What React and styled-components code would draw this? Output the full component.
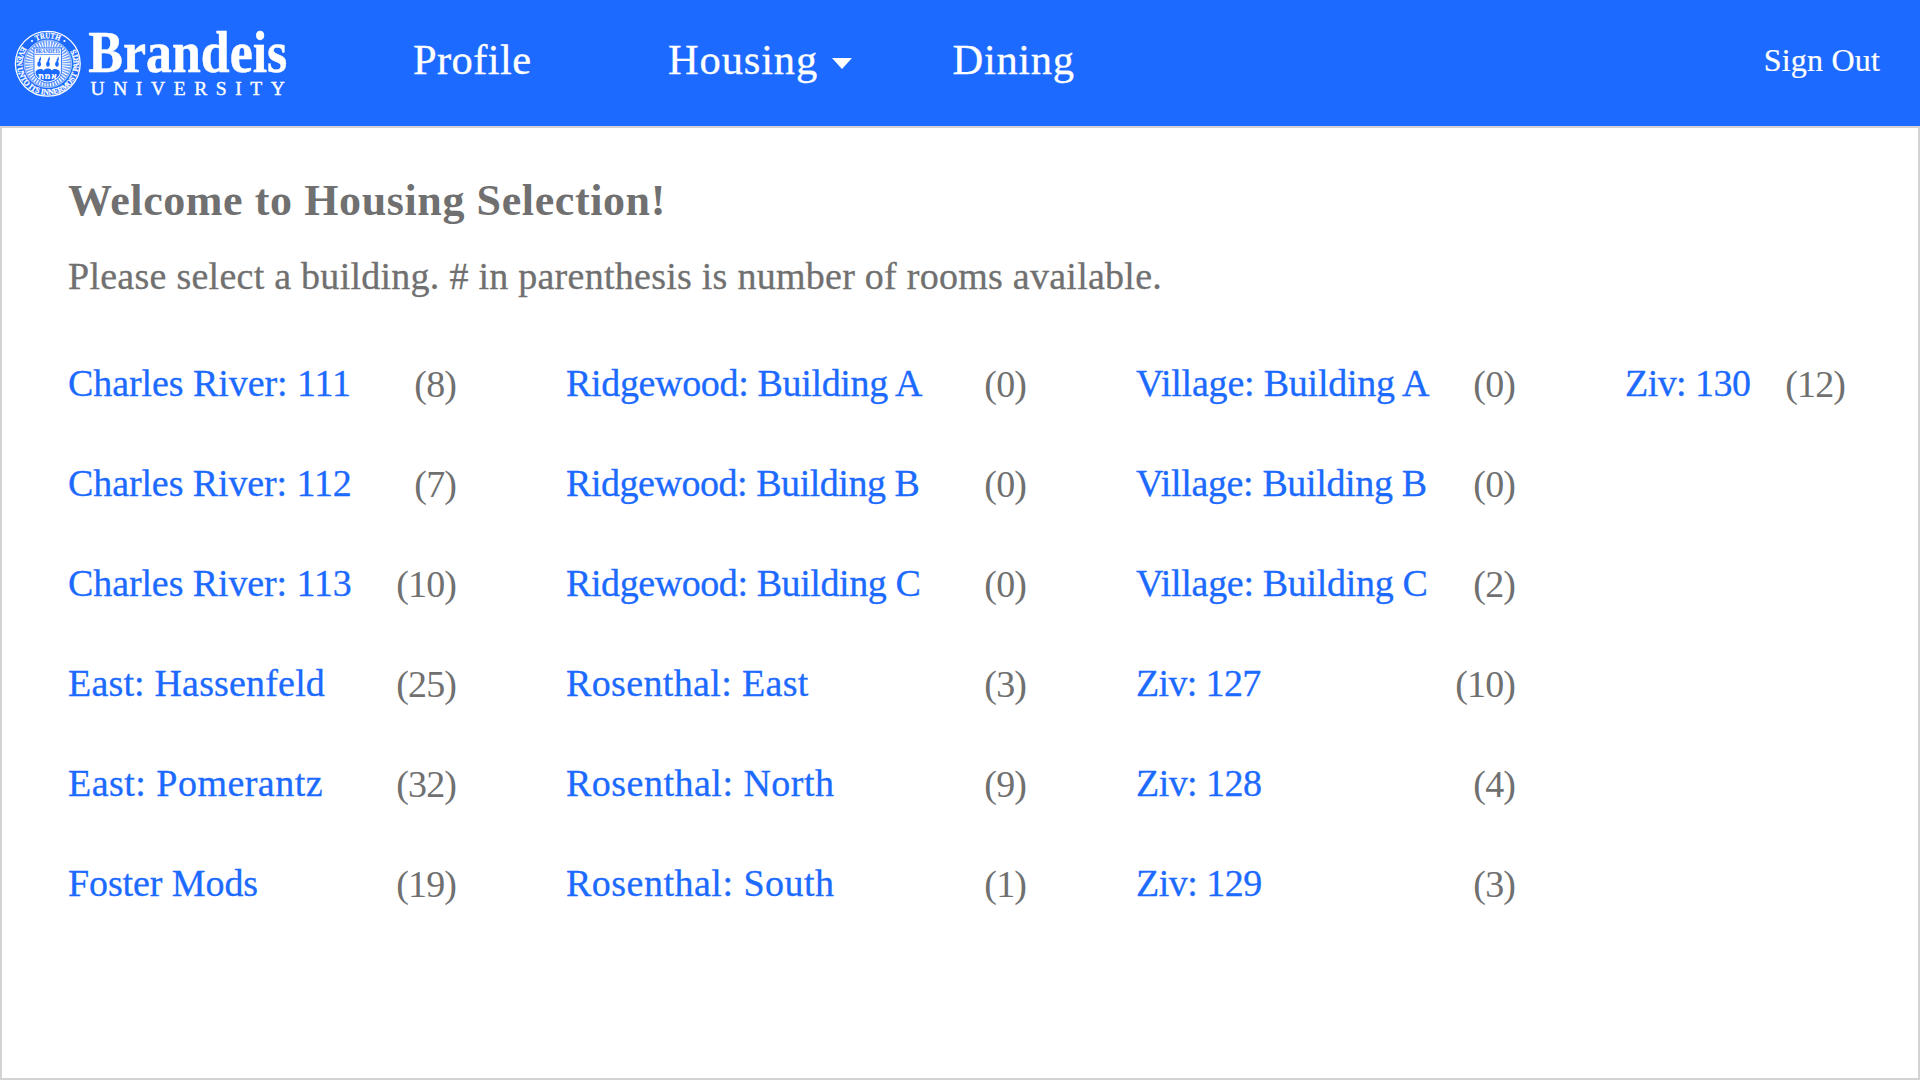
import React from 'react';
import styled, { createGlobalStyle } from 'styled-components';

const BLUE = '#1c6aff';
const GREY = '#707070';

const GlobalStyle = createGlobalStyle`
  *, *::before, *::after { box-sizing: border-box; }
  body {
    margin: 0;
    background: #ffffff;
    font-family: "Liberation Serif", serif;
    font-kerning: normal;
  }
`;

const Page = styled.div`
  display: flex;
  flex-direction: column;
  width: 100%;
  height: 100vh;
`;

const Header = styled.header`
  display: flex;
  align-items: center;
  flex: 0 0 126px;
  padding: 0 40px 8px 0;
  background: ${BLUE};
  color: #ffffff;
`;

const LogoSvg = styled.svg`
  flex: none;
  width: 300px;
  height: 118px;
  overflow: visible;
`;

const Nav = styled.nav`
  display: grid;
  grid-template-columns: 255px 284.5px auto;
  margin-left: 113px;
  padding-top: 2px;
`;

const NavLink = styled.a`
  display: flex;
  align-items: center;
  font-size: 42.5px;
  line-height: 50px;
  letter-spacing: ${(p) => p.$tracking}px;
  color: inherit;
  text-decoration: none;
  -webkit-text-stroke: 0.3px currentColor;
`;

const Caret = styled.svg`
  width: 20px;
  height: 11px;
  margin: 7px 0 0 14px;
`;

const SignOut = styled.a`
  margin-left: auto;
  padding-top: 2px;
  font-size: 32px;
  line-height: 40px;
  letter-spacing: 0.2px;
  color: inherit;
  text-decoration: none;
  -webkit-text-stroke: 0.2px currentColor;
`;

const Main = styled.main`
  flex: 1;
  padding: 48px 66px 0;
  border: 2px solid #d3d3d3;
  color: ${GREY};
`;

const Title = styled.h1`
  margin: 0 0 28px;
  font-size: 44px;
  line-height: 50px;
  letter-spacing: 0.6px;
`;

const Intro = styled.p`
  margin: 0 0 35px;
  font-size: 38px;
  line-height: 44px;
  letter-spacing: 0.26px;
  -webkit-text-stroke: 0.3px currentColor;
`;

const BuildingGrid = styled.ul`
  display: grid;
  grid-auto-flow: column;
  grid-template-rows: repeat(6, 100px);
  grid-template-columns: 388px 460px 379px 220px;
  column-gap: 110px;
  margin: 0;
  padding: 0;
  list-style: none;
`;

const Building = styled.li`
  display: flex;
  align-items: center;
  justify-content: space-between;
  font-size: 38px;
  line-height: 44px;
  white-space: nowrap;
`;

const BuildingLink = styled.a`
  color: ${BLUE};
  text-decoration: none;
  letter-spacing: ${(p) => p.$tracking}px;
  -webkit-text-stroke: 0.3px currentColor;
`;

const Count = styled.span`
  padding-top: 1px;
  letter-spacing: -0.9px;
`;

const buildings = [
  ['Charles River: 111', 8, -0.07],
  ['Charles River: 112', 7, -0.11],
  ['Charles River: 113', 10, -0.11],
  ['East: Hassenfeld', 25, 0.17],
  ['East: Pomerantz', 32, 0.47],
  ['Foster Mods', 19, -0.1],
  ['Ridgewood: Building A', 0, -0.34],
  ['Ridgewood: Building B', 0, -0.46],
  ['Ridgewood: Building C', 0, -0.42],
  ['Rosenthal: East', 3, 0.35],
  ['Rosenthal: North', 9, 0.49],
  ['Rosenthal: South', 1, 0.49],
  ['Village: Building A', 0, -0.22],
  ['Village: Building B', 0, -0.36],
  ['Village: Building C', 2, -0.31],
  ['Ziv: 127', 10, -0.65],
  ['Ziv: 128', 4, -0.55],
  ['Ziv: 129', 3, -0.5],
  ['Ziv: 130', 12, -0.55],
];

const rays = Array.from({ length: 48 }, (_, i) => (i * Math.PI) / 24);

function Flame({ x }) {
  return (
    <path
      transform={`translate(${x} 56)`}
      d="M1.6 0 C2.6 1.8 -0.6 3 0.4 5 C-1.4 6.2 -1.8 8.6 -0.6 10.2 C0.4 11.4 2.2 10.6 2.4 8.8 C2.7 7 1.2 6.4 2 4.6 C2.7 3.2 2.8 1.6 1.6 0 Z"
      fill={BLUE}
    />
  );
}

function Logo() {
  return (
    <LogoSvg viewBox="0 0 300 118" role="img" aria-label="Brandeis University">
      <defs>
        <path id="sealTop" d="M22.3 63.8 A25.5 25.5 0 0 1 73.3 63.8" />
        <path id="sealBottom" d="M22.5 46 A31 31 0 1 0 73.1 46" />
      </defs>
      <g fill="#ffffff">
        <circle cx="47.8" cy="63.8" r="32.4" fill="none" stroke="#ffffff" strokeWidth="1.3" />
        <circle cx="47.8" cy="63.8" r="23.8" fill="#ffffff" fillOpacity="0.35" stroke="#ffffff" strokeWidth="0.5" />
        {rays.map((a) => (
          <line
            key={a}
            x1={47.8 + 12 * Math.cos(a)}
            y1={63.8 + 12 * Math.sin(a)}
            x2={47.8 + 22.8 * Math.cos(a)}
            y2={63.8 + 22.8 * Math.sin(a)}
            stroke="#ffffff"
            strokeWidth="1.1"
          />
        ))}
        <circle cx="32" cy="41" r="1.1" />
        <circle cx="64.4" cy="41" r="1.1" />
        <g
          fontFamily="Liberation Serif, serif"
          fontWeight="700"
          fontSize="8.2"
          stroke="#ffffff"
          strokeWidth="0.25"
        >
          <text textAnchor="middle">
            <textPath href="#sealTop" startOffset="50%" textLength="24" lengthAdjust="spacingAndGlyphs">
              TRUTH
            </textPath>
          </text>
          <text>
            <textPath href="#sealBottom" startOffset="0.5" textLength="131" lengthAdjust="spacingAndGlyphs">
              EVEN UNTO ITS INNERMOST PARTS
            </textPath>
          </text>
        </g>
        <path
          d="M34 48 H61.4 V72 C61.4 78 53.5 82.5 47.7 83 C41.9 82.5 34 78 34 72 Z"
          stroke={BLUE}
          strokeWidth="0.9"
        />
        <path d="M35 54.4 H60.4" stroke={BLUE} strokeWidth="0.7" />
        <text
          x="35.4"
          y="53.2"
          fontFamily="Liberation Serif, serif"
          fontWeight="700"
          fontSize="5.6"
          textLength="24.6"
          lengthAdjust="spacingAndGlyphs"
          fill={BLUE}
        >
          BRANDEIS
        </text>
        <Flame x={38.6} />
        <Flame x={47.4} />
        <Flame x={56.4} />
        <path
          d="M35.6 71.4 C37 69 41.5 68 43.6 70.4 C45.6 67.8 50 67.8 52 70.4 C54 68 58.4 69 59.8 71.4 V73.5 C58.5 78.4 52.5 81 47.7 81.6 C42.9 81 37 78.4 35.6 73.5 Z"
          fill={BLUE}
        />
        <text
          x="47.7"
          y="79"
          fontFamily="DejaVu Sans, sans-serif"
          fontWeight="700"
          fontSize="10"
          textAnchor="middle"
          textLength="19"
          lengthAdjust="spacingAndGlyphs"
        >
          אמת
        </text>
        <text
          x="88.3"
          y="71.5"
          fontFamily="Liberation Serif, serif"
          fontWeight="700"
          fontSize="60"
          textLength="199"
          lengthAdjust="spacingAndGlyphs"
          stroke="#ffffff"
          strokeWidth="0.5"
        >
          Brandeis
        </text>
        <text
          x="90.5"
          y="95"
          fontFamily="Liberation Serif, serif"
          fontSize="19.5"
          letterSpacing="8.6"
          stroke="#ffffff"
          strokeWidth="0.4"
        >
          UNIVERSITY
        </text>
      </g>
    </LogoSvg>
  );
}

export default function App() {
  return (
    <Page>
      <GlobalStyle />
      <Header>
        <Logo />
        <Nav>
          <NavLink $tracking={0.4}>Profile</NavLink>
          <NavLink $tracking={0.85}>
            Housing
            <Caret viewBox="0 0 20 11" aria-hidden="true">
              <path d="M0 0 H20 L10 11 Z" fill="#ffffff" />
            </Caret>
          </NavLink>
          <NavLink $tracking={0.7}>Dining</NavLink>
        </Nav>
        <SignOut>Sign Out</SignOut>
      </Header>
      <Main>
        <Title>Welcome to Housing Selection!</Title>
        <Intro>Please select a building. # in parenthesis is number of rooms available.</Intro>
        <BuildingGrid>
          {buildings.map(([name, rooms, tracking]) => (
            <Building key={name}>
              <BuildingLink $tracking={tracking}>{name}</BuildingLink>
              <Count>({rooms})</Count>
            </Building>
          ))}
        </BuildingGrid>
      </Main>
    </Page>
  );
}
